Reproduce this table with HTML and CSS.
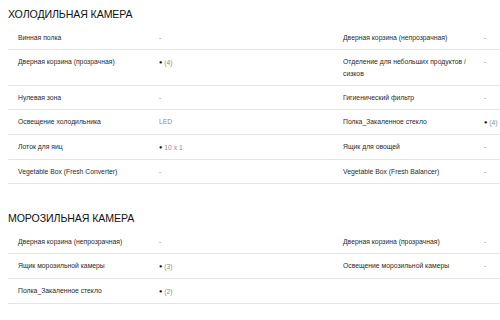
FILE: index.html
```html
<!DOCTYPE html>
<html lang="ru">
<head>
<meta charset="utf-8">
<link rel="stylesheet" href="styles.css">
</head>
<body>
<section class="spec">
  <h2 class="spec-title">ХОЛОДИЛЬНАЯ КАМЕРА</h2>
  <div class="spec-grid">
    <div class="item"><div class="label">Винная полка</div><div class="value">-</div></div>
    <div class="item"><div class="label">Дверная корзина (непрозрачная)</div><div class="value">-</div></div>
    <div class="item"><div class="label">Дверная корзина (прозрачная)</div><div class="value"><span class="dot">●</span>(4)</div></div>
    <div class="item"><div class="label">Отделение для небольших продуктов / сизков</div><div class="value">-</div></div>
    <div class="item"><div class="label">Нулевая зона</div><div class="value">-</div></div>
    <div class="item"><div class="label">Гигиенический фильтр</div><div class="value">-</div></div>
    <div class="item"><div class="label">Освещение холодильника</div><div class="value">LED</div></div>
    <div class="item"><div class="label">Полка_Закаленное стекло</div><div class="value"><span class="dot">●</span>(4)</div></div>
    <div class="item"><div class="label">Лоток для яиц</div><div class="value"><span class="dot">●</span>10 x 1</div></div>
    <div class="item"><div class="label">Ящик для овощей</div><div class="value">-</div></div>
    <div class="item"><div class="label">Vegetable Box (Fresh Converter)</div><div class="value">-</div></div>
    <div class="item"><div class="label">Vegetable Box (Fresh Balancer)</div><div class="value">-</div></div>
  </div>
</section>
<section class="spec">
  <h2 class="spec-title">МОРОЗИЛЬНАЯ КАМЕРА</h2>
  <div class="spec-grid">
    <div class="item"><div class="label">Дверная корзина (непрозрачная)</div><div class="value">-</div></div>
    <div class="item"><div class="label">Дверная корзина (прозрачная)</div><div class="value">-</div></div>
    <div class="item"><div class="label">Ящик морозильной камеры</div><div class="value"><span class="dot">●</span>(3)</div></div>
    <div class="item"><div class="label">Освещение морозильной камеры</div><div class="value">-</div></div>
    <div class="item"><div class="label">Полка_Закаленное стекло</div><div class="value"><span class="dot">●</span>(2)</div></div>
    <div class="item"><div class="label"></div><div class="value"></div></div>
  </div>
</section>
</body>
</html>
```
FILE: styles.css
```css
html, body {
  margin: 0;
  padding: 0;
  background: #fff;
  overflow: hidden;
}
body {
  padding: 7px 0 0 8px;
  font-family: "Liberation Sans", Arial, sans-serif;
  color: #333;
  width: 660px;
}
.spec {
  margin-bottom: 27px;
}
.spec-title {
  margin: 0 0 5px 0;
  font-size: 10.6px;
  line-height: 14px;
  font-weight: normal;
  color: #111;
  letter-spacing: -0.1px;
}
.spec-grid {
  display: grid;
  grid-template-columns: 325px 325px;
}
.item {
  display: flex;
  border-bottom: 1px solid #e6e6e6;
  padding: 6px 0 5px 10px;
  font-size: 6.8px;
  line-height: 12px;
}
.label {
  width: 141px;
  flex: none;
  padding-right: 12px;
  box-sizing: border-box;
  color: #2a2a2a;
}
.value {
  color: #8e8e8e;
}
.dot {
  color: #111;
  font-size: 5.5px;
  margin-right: 2px;
  vertical-align: 1px;
}
```
